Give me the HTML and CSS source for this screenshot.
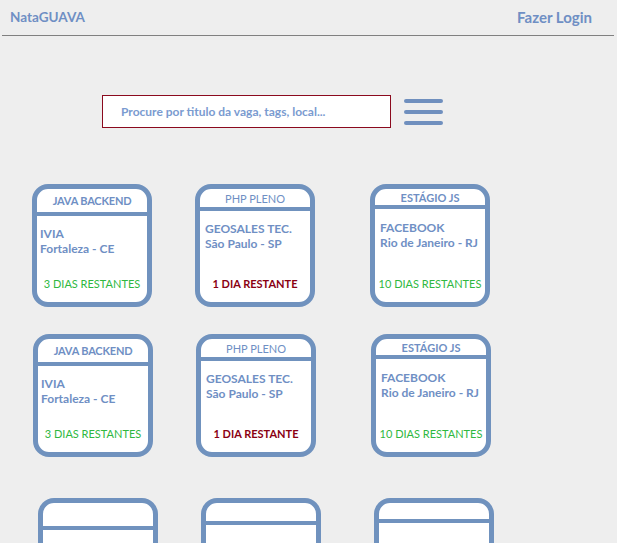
FILE: index.html
```html
<!DOCTYPE html>
<html lang="pt-BR">
<head>
<meta charset="utf-8">
<title>NataGUAVA</title>
<link rel="stylesheet" href="styles.css">
</head>
<body>
<header class="topbar">
  <span class="brand">NataGUAVA</span>
  <a class="login" href="#">Fazer Login</a>
</header>

<div class="search-row">
  <div class="search">Procure por titulo da vaga, tags, local...</div>
  <button class="menu" aria-label="Menu"><span></span><span></span><span></span></button>
</div>

<main class="jobs">
  <div class="row">
    <article class="card">
      <div class="card-head head-tall title-semi">JAVA BACKEND</div>
      <div class="card-body"><div class="company">IVIA</div><div class="place">Fortaleza - CE</div></div>
      <div class="card-foot foot-green">3 DIAS RESTANTES</div>
    </article>
    <article class="card">
      <div class="card-head head-mid title-regular">PHP PLENO</div>
      <div class="card-body body-wide"><div class="company">GEOSALES TEC.</div><div class="place">São Paulo - SP</div></div>
      <div class="card-foot foot-red">1 DIA RESTANTE</div>
    </article>
    <article class="card">
      <div class="card-head head-short title-bold">ESTÁGIO JS</div>
      <div class="card-body body-wide body-high"><div class="company">FACEBOOK</div><div class="place">Rio de Janeiro - RJ</div></div>
      <div class="card-foot foot-green">10 DIAS RESTANTES</div>
    </article>
  </div>

  <div class="row row-second">
    <article class="card">
      <div class="card-head head-tall title-semi">JAVA BACKEND</div>
      <div class="card-body"><div class="company">IVIA</div><div class="place">Fortaleza - CE</div></div>
      <div class="card-foot foot-green">3 DIAS RESTANTES</div>
    </article>
    <article class="card">
      <div class="card-head head-mid title-regular">PHP PLENO</div>
      <div class="card-body body-wide"><div class="company">GEOSALES TEC.</div><div class="place">São Paulo - SP</div></div>
      <div class="card-foot foot-red">1 DIA RESTANTE</div>
    </article>
    <article class="card">
      <div class="card-head head-short title-bold">ESTÁGIO JS</div>
      <div class="card-body body-wide body-high"><div class="company">FACEBOOK</div><div class="place">Rio de Janeiro - RJ</div></div>
      <div class="card-foot foot-green">10 DIAS RESTANTES</div>
    </article>
  </div>

  <div class="row row-third">
    <article class="card"><div class="card-head head-tall"></div><div class="card-body"></div></article>
    <article class="card"><div class="card-head head-mid"></div><div class="card-body"></div></article>
    <article class="card"><div class="card-head head-short"></div><div class="card-body"></div></article>
  </div>
</main>
</body>
</html>
```

FILE: styles.css
```css
* { box-sizing: border-box; }

html, body {
  margin: 0;
  background: #eeeeee;
  font-family: Lato, "Open Sans", "Liberation Sans", sans-serif;
  color: #6f8fc4;
}

body { overflow: hidden; height: 543px; }

.topbar {
  display: flex;
  justify-content: space-between;
  align-items: center;
  height: 36px;
  margin: 0 3px 0 2px;
  padding: 0 22px 2px 8px;
  border-bottom: 1px solid #808080;
}

.brand {
  font-size: 13.5px;
  font-weight: 700;
  color: #6f8fc4;
}

.login {
  font-size: 15px;
  font-weight: 700;
  color: #6f8fc4;
  text-decoration: none;
}

.search-row {
  display: flex;
  align-items: center;
  margin-top: 59px;
  padding-left: 102px;
}

.search {
  width: 289px;
  height: 33px;
  border: 1px solid #8b0a1e;
  background: #ffffff;
  padding-left: 18px;
  display: flex;
  align-items: center;
  font-size: 12px;
  font-weight: 700;
  color: #7a9bd0;
}

.menu {
  margin-left: 13px;
  width: 39px;
  padding: 0;
  border: 0;
  background: none;
  display: flex;
  flex-direction: column;
  gap: 7px;
}

.menu span {
  display: block;
  height: 4px;
  width: 39px;
  border-radius: 2px;
  background: #6f8fbe;
}

.jobs { margin-top: 56px; }

.row {
  display: grid;
  grid-template-columns: 163px 175px 120px;
  padding-left: 32px;
}

.row-second { margin-top: 27px; padding-left: 33px; }

.row-third {
  margin-top: 41px;
  padding-left: 38px;
  grid-template-columns: 163px 173px 120px;
}

.card {
  width: 120px;
  height: 123px;
  border: 5px solid #7092be;
  border-radius: 16px;
  background: #ffffff;
  display: flex;
  flex-direction: column;
  overflow: hidden;
}

.card-head {
  flex: none;
  border-bottom: 4px solid #7092be;
  display: flex;
  align-items: center;
  justify-content: center;
  font-size: 11px;
  color: #6f8fc4;
  white-space: nowrap;
}

.head-tall { height: 27px; }
.head-mid { height: 22px; }
.head-short { height: 20px; }

.title-regular { font-weight: 400; }
.title-semi { font-weight: 700; letter-spacing: -0.2px; }
.title-bold { font-weight: 700; }

.card-body {
  flex: 1;
  padding: 10px 0 0 3px;
  font-size: 12px;
  font-weight: 700;
  line-height: 15px;
  color: #6f8fc4;
  white-space: nowrap;
}

.body-wide { padding-left: 5px; }
.body-high { padding-top: 11px; }

.card-foot {
  flex: none;
  text-align: center;
  font-size: 11px;
  line-height: 14px;
  padding-bottom: 11px;
  white-space: nowrap;
}

.foot-green { color: #2fb83f; }
.foot-red { color: #8a0012; font-weight: 700; }
```
